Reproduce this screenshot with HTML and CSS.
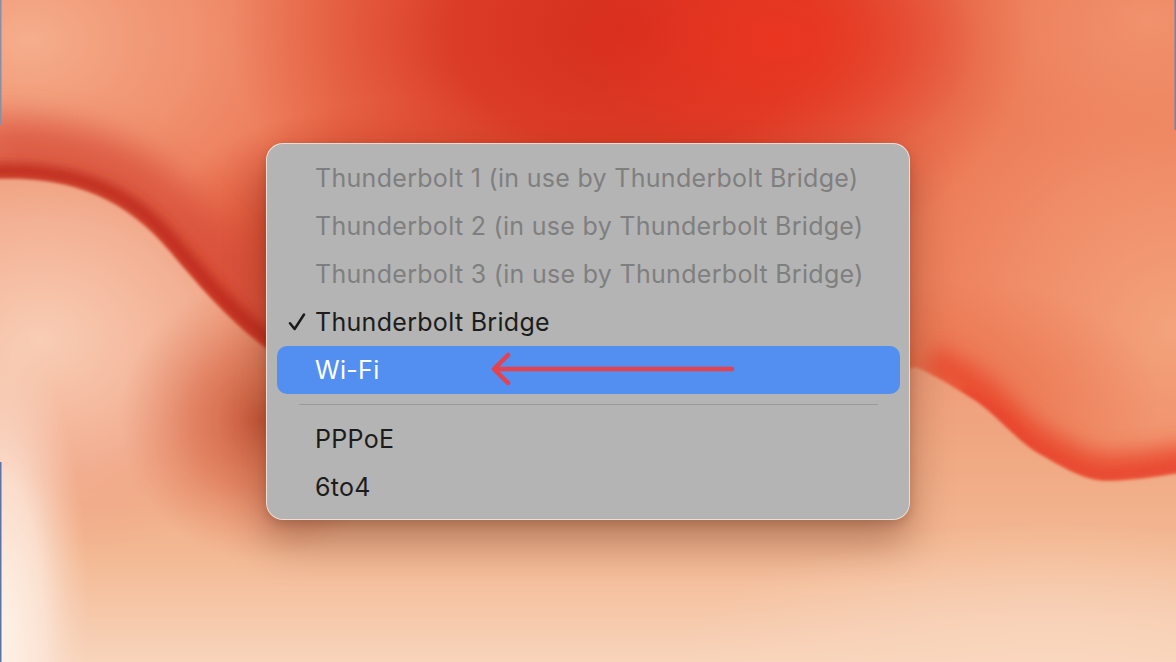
FILE: index.html
```html
<!DOCTYPE html>
<html lang="en">
<head>
<meta charset="utf-8">
<title>Network interface menu</title>
<link rel="stylesheet" href="styles.css">
</head>
<body>
<div class="stage">
  <svg class="wallpaper" viewBox="0 0 1176 662" width="1176" height="662" aria-hidden="true">
    <defs>
      <radialGradient id="gLightTL"><stop offset="0" stop-color="#f5ae8c"/><stop offset="0.5" stop-color="#f29c7a" stop-opacity="0.7"/><stop offset="1" stop-color="#ef8c6a" stop-opacity="0"/></radialGradient>
      <radialGradient id="gRedTop"><stop offset="0" stop-color="#d62d1e"/><stop offset="0.45" stop-color="#d8321f" stop-opacity="0.85"/><stop offset="1" stop-color="#dc4028" stop-opacity="0"/></radialGradient>
      <radialGradient id="gRedHot"><stop offset="0" stop-color="#eb3520"/><stop offset="1" stop-color="#eb3520" stop-opacity="0"/></radialGradient>
      <radialGradient id="gRedMid"><stop offset="0" stop-color="#c9301f"/><stop offset="0.5" stop-color="#cf3722" stop-opacity="0.7"/><stop offset="1" stop-color="#d84028" stop-opacity="0"/></radialGradient>
      <radialGradient id="gLightR"><stop offset="0" stop-color="#f3a37c"/><stop offset="0.5" stop-color="#f19670" stop-opacity="0.7"/><stop offset="1" stop-color="#ef8a62" stop-opacity="0"/></radialGradient>
      <radialGradient id="gOrange"><stop offset="0" stop-color="#e96a46"/><stop offset="1" stop-color="#e96a46" stop-opacity="0"/></radialGradient>
      <linearGradient id="lower" gradientUnits="userSpaceOnUse" x1="0" y1="360" x2="0" y2="662">
        <stop offset="0" stop-color="#ee9c78"/>
        <stop offset="0.35" stop-color="#f0aa84"/>
        <stop offset="0.65" stop-color="#f3b994"/>
        <stop offset="1" stop-color="#f8d4bb"/>
      </linearGradient>
      <radialGradient id="gHill"><stop offset="0" stop-color="#f8cdb4"/><stop offset="0.55" stop-color="#f3b094"/><stop offset="1" stop-color="#f0a282" stop-opacity="0"/></radialGradient>
      <radialGradient id="gCream"><stop offset="0" stop-color="#fef3ea"/><stop offset="0.5" stop-color="#fce6d8" stop-opacity="0.85"/><stop offset="1" stop-color="#f8d4bf" stop-opacity="0"/></radialGradient>
      <radialGradient id="gHillRed"><stop offset="0" stop-color="#c95a3c"/><stop offset="0.5" stop-color="#d86a4a" stop-opacity="0.6"/><stop offset="1" stop-color="#e08060" stop-opacity="0"/></radialGradient>
      <radialGradient id="gPeach"><stop offset="0" stop-color="#f9d6be"/><stop offset="1" stop-color="#f9d6be" stop-opacity="0"/></radialGradient>
      <clipPath id="lowerClip">
        <path d="M -20 180 C 60 174 120 192 170 252 C 215 305 245 338 300 372 L 700 420 L 916 367 C 940 378 955 388 976 401 C 1000 418 1020 445 1043 456 C 1070 472 1090 482 1109 481 C 1140 480 1160 476 1200 470 L 1200 700 L -20 700 Z"/>
      </clipPath>
      <filter id="b16" x="-20%" y="-80%" width="140%" height="260%"><feGaussianBlur stdDeviation="16"/></filter>
      <filter id="b6" x="-20%" y="-80%" width="140%" height="260%"><feGaussianBlur stdDeviation="6"/></filter>
      <filter id="b10" x="-20%" y="-80%" width="140%" height="260%"><feGaussianBlur stdDeviation="10"/></filter>
      <filter id="b2" x="-5%" y="-5%" width="110%" height="110%"><feGaussianBlur stdDeviation="1.6"/></filter>
    </defs>
    <rect width="1176" height="662" fill="#ec7856"/>
    <ellipse cx="30" cy="40" rx="330" ry="250" fill="url(#gLightTL)"/>
    <ellipse cx="1176" cy="330" rx="330" ry="330" fill="url(#gLightR)"/>
    <ellipse cx="1150" cy="20" rx="220" ry="140" fill="url(#gLightR)" opacity="0.6"/>
    <ellipse cx="630" cy="30" rx="400" ry="270" fill="url(#gRedTop)"/>
    <ellipse cx="780" cy="40" rx="200" ry="130" fill="url(#gRedHot)" opacity="0.9"/>
    <ellipse cx="400" cy="270" rx="260" ry="170" fill="url(#gRedMid)"/>
    <ellipse cx="960" cy="400" rx="200" ry="120" fill="url(#gOrange)" opacity="0.7"/>
    <path d="M -20 150 C 60 144 130 164 180 224 C 225 277 255 310 310 344 L 430 400" fill="none" stroke="#d8503a" stroke-width="60" opacity="0.8" filter="url(#b16)"/>
    <path d="M -20 172 C 60 166 125 184 174 244 C 219 297 249 330 304 364 L 424 420" fill="none" stroke="#bf2a1b" stroke-width="16" filter="url(#b6)"/>
    <path d="M 930 360 C 955 372 970 382 980 390 C 1000 406 1020 432 1043 443 C 1070 459 1090 469 1109 468 C 1140 467 1160 463 1200 457" fill="none" stroke="#e94a2e" stroke-width="30" opacity="0.85" filter="url(#b10)"/>
    <path d="M 960 392 C 975 398 990 408 1000 416 C 1015 430 1028 445 1043 452 C 1070 467 1090 477 1109 476 C 1140 475 1160 471 1200 465" fill="none" stroke="#e8402a" stroke-width="10" filter="url(#b6)"/>
    <g filter="url(#b2)">
      <g clip-path="url(#lowerClip)">
        <rect x="-20" y="150" width="1220" height="560" fill="url(#lower)"/>
        <ellipse cx="40" cy="340" rx="280" ry="220" fill="url(#gHill)"/>
        <ellipse cx="260" cy="420" rx="140" ry="140" fill="url(#gHillRed)"/>
        <ellipse cx="0" cy="640" rx="90" ry="320" fill="url(#gCream)"/>
        <ellipse cx="1050" cy="680" rx="380" ry="160" fill="url(#gPeach)"/>
      </g>
    </g>
    <rect x="0" y="0" width="1.5" height="125" fill="#8a8fa8"/>
    <rect x="0" y="462" width="1.5" height="200" fill="#5a74a8"/>
    <rect x="1174.5" y="0" width="1.5" height="130" fill="#7a80a8"/>
  </svg>

  <div class="menu" role="menu">
    <div class="item disabled" role="menuitem">Thunderbolt 1 (in use by Thunderbolt Bridge)</div>
    <div class="item disabled" role="menuitem">Thunderbolt 2 (in use by Thunderbolt Bridge)</div>
    <div class="item disabled" role="menuitem">Thunderbolt 3 (in use by Thunderbolt Bridge)</div>
    <div class="item checked" role="menuitem">
      <svg class="check" viewBox="0 0 18 18" width="18" height="18" aria-hidden="true">
        <path d="M2 10.2 L6.6 16 L16 1.5" fill="none" stroke="#1a1a1a" stroke-width="2.5" stroke-linecap="round" stroke-linejoin="round"/>
      </svg>
      Thunderbolt Bridge
    </div>
    <div class="item selected" role="menuitem">
      Wi-Fi
      <svg class="arrow" viewBox="0 0 250 36" width="250" height="36" aria-hidden="true">
        <path d="M246 18 L8 18 M22 4 L8 18 L22 32" fill="none" stroke="#e3424e" stroke-width="4.5" stroke-linecap="round" stroke-linejoin="round"/>
      </svg>
    </div>
    <div class="separator"></div>
    <div class="item" role="menuitem">PPPoE</div>
    <div class="item" role="menuitem">6to4</div>
  </div>
</div>
</body>
</html>
```

FILE: styles.css
```css
html, body {
  margin: 0;
  padding: 0;
}

body {
  width: 1176px;
  height: 662px;
  overflow: hidden;
  font-family: Inter, "Noto Sans", "Liberation Sans", sans-serif;
}

.stage {
  position: relative;
  width: 1176px;
  height: 662px;
  display: flex;
  align-items: center;
  justify-content: center;
}

.wallpaper {
  position: absolute;
  left: 0;
  top: 0;
  display: block;
}

.menu {
  position: relative;
  width: 623px;
  padding: 10px 9px 8px 10px;
  background: #b4b4b4;
  border: 1px solid rgba(255, 238, 228, 0.75);
  border-radius: 17px;
  box-shadow: 0 22px 40px rgba(90, 35, 15, 0.4), 0 4px 10px rgba(90, 35, 15, 0.2);
  display: flex;
  flex-direction: column;
}

.item {
  position: relative;
  height: 48px;
  display: flex;
  align-items: center;
  padding-left: 38px;
  font-size: 25px;
  letter-spacing: 0.3px;
  color: #1c1c1c;
  border-radius: 10px;
}

.item.disabled {
  color: #7f7f7f;
}

.check {
  position: absolute;
  left: 11px;
  top: 15px;
}

.item.selected {
  background: #538ef1;
  color: #ffffff;
}

.arrow {
  position: absolute;
  left: 209px;
  top: 5px;
}

.separator {
  height: 1px;
  margin: 10px 22px;
  background: #9a9a9a;
}
```
